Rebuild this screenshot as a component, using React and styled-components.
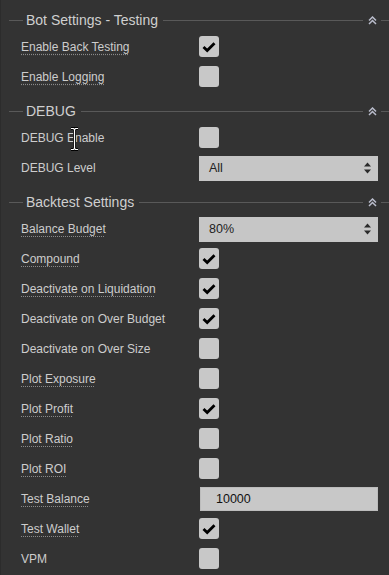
import React from "react";
import styled, { createGlobalStyle } from "styled-components";

const GlobalStyle = createGlobalStyle`
    html, body {
        margin: 0;
        padding: 0;
        background: #333333;
    }
    body {
        font-family: "Liberation Sans", Arial, sans-serif;
    }
`;

const sections = [
    {
        title: "Bot Settings - Testing",
        rows: [
            { label: "Enable Back Testing", tip: true, type: "check", value: true },
            { label: "Enable Logging", tip: true, type: "check", value: false },
        ],
    },
    {
        title: "DEBUG",
        rows: [
            { label: "DEBUG Enable", type: "check", value: false },
            { label: "DEBUG Level", type: "select", value: "All" },
        ],
    },
    {
        title: "Backtest Settings",
        rows: [
            { label: "Balance Budget", tip: true, type: "select", value: "80%" },
            { label: "Compound", tip: true, type: "check", value: true },
            { label: "Deactivate on Liquidation", tip: true, type: "check", value: true },
            { label: "Deactivate on Over Budget", type: "check", value: true },
            { label: "Deactivate on Over Size", type: "check", value: false },
            { label: "Plot Exposure", tip: true, type: "check", value: false },
            { label: "Plot Profit", tip: true, type: "check", value: true },
            { label: "Plot Ratio", tip: true, type: "check", value: false },
            { label: "Plot ROI", tip: true, type: "check", value: false },
            { label: "Test Balance", tip: true, type: "text", value: "10000" },
            { label: "Test Wallet", tip: true, type: "check", value: true },
            { label: "VPM", type: "check", value: false },
        ],
    },
];

function CollapseIcon() {
    return (
        <svg width="9" height="9" viewBox="0 0 9 9">
            <path
                d="M1 4.5 L4.5 1 L8 4.5 M1 8 L4.5 4.5 L8 8"
                fill="none"
                stroke="#b9bccb"
                strokeWidth="1.5"
            />
        </svg>
    );
}

function Spinner() {
    return (
        <svg width="9" height="14" viewBox="0 0 9 14">
            <path d="M4.5 1.5 L8 5.5 L1 5.5 Z" fill="#2a2a2a" />
            <path d="M1 8.5 L8 8.5 L4.5 12.5 Z" fill="#2a2a2a" />
        </svg>
    );
}

function Check() {
    return (
        <svg width="14" height="12" viewBox="0 0 14 12">
            <path
                d="M1.5 6 L5.2 9.6 L12.5 2.2"
                fill="none"
                stroke="#000"
                strokeWidth="2.8"
            />
        </svg>
    );
}

function Field({ row }) {
    if (row.type === "check") {
        return <CheckBox>{row.value && <Check />}</CheckBox>;
    }
    if (row.type === "select") {
        return (
            <Select>
                <span>{row.value}</span>
                <Spinner />
            </Select>
        );
    }
    return <TextInput>{row.value}</TextInput>;
}

function App() {
    return (
        <Page>
            <GlobalStyle />
            {sections.map((section) => (
                <Section key={section.title}>
                    <Header>
                        <Line $short />
                        <Title>{section.title}</Title>
                        <Line />
                        <CollapseIcon />
                        <Line $tail />
                    </Header>
                    {section.rows.map((row) => (
                        <Row key={row.label}>
                            <Label $tip={row.tip}>{row.label}</Label>
                            <Field row={row} />
                        </Row>
                    ))}
                </Section>
            ))}
            <Cursor width="9" height="24" viewBox="0 0 9 24">
                <path
                    d="M1 1.5 H3.5 L4.5 2.5 L5.5 1.5 H8 M4.5 2.5 V21.5 M1 22.5 H3.5 L4.5 21.5 L5.5 22.5 H8"
                    fill="none"
                    stroke="#000"
                    strokeWidth="2.8"
                />
                <path
                    d="M1 1.5 H3.5 L4.5 2.5 L5.5 1.5 H8 M4.5 2.5 V21.5 M1 22.5 H3.5 L4.5 21.5 L5.5 22.5 H8"
                    fill="none"
                    stroke="#fff"
                    strokeWidth="1.2"
                />
            </Cursor>
        </Page>
    );
}

export default App;

const Page = styled.div`
    position: relative;
    width: 389px;
    height: 575px;
    box-sizing: border-box;
    background: #333333;
    border-left: 1px solid #2c2c2c;
    padding-top: 1px;
    overflow: hidden;
`;

const Section = styled.div`
    display: flex;
    flex-direction: column;
`;

const Header = styled.div`
    display: flex;
    align-items: center;
    height: 31px;
    padding-top: 8px;
    box-sizing: border-box;
`;

const Line = styled.div`
    height: 1px;
    background: #595959;
    flex: ${(p) => (p.$short || p.$tail ? "none" : "1")};
    width: ${(p) => (p.$short ? "14px" : p.$tail ? "8px" : "auto")};
    margin: ${(p) =>
        p.$short ? "0 3px 0 8px" : p.$tail ? "0 0 0 4px" : "0 5px 0 5px"};
`;

const Title = styled.span`
    color: #cfcfcf;
    font-size: 14px;
    line-height: 18px;
    padding-bottom: 1px;
`;

const Row = styled.div`
    display: flex;
    align-items: center;
    height: 30px;
    padding-left: 20px;
    padding-right: 11px;
`;

const Label = styled.span`
    width: 178px;
    flex: none;
    color: #cdcdcd;
    font-size: 12px;
    line-height: 15px;
    padding-top: 1px;
    text-decoration: ${(p) => (p.$tip ? "underline dotted #8a8a8a" : "none")};
    text-underline-offset: 3px;
`;

const CheckBox = styled.div`
    width: 20px;
    height: 21px;
    margin-top: -1px;
    box-sizing: border-box;
    border-radius: 3px;
    background: #c8c8c8;
    display: flex;
    align-items: center;
    justify-content: center;
`;

const Select = styled.div`
    flex: 1;
    height: 25px;
    background: #c6c6c6;
    display: flex;
    align-items: center;
    justify-content: space-between;
    padding: 0 6px 0 10px;
    font-size: 12.5px;
    color: #222;
`;

const TextInput = styled.div`
    flex: 1;
    height: 24px;
    margin-left: 1px;
    box-sizing: border-box;
    border: 1px solid #bcbcbc;
    background: #c8c8c8;
    display: flex;
    align-items: center;
    padding-left: 15px;
    font-size: 12.5px;
    color: #111;
`;

const Cursor = styled.svg`
    position: absolute;
    left: 69px;
    top: 127px;
`;
